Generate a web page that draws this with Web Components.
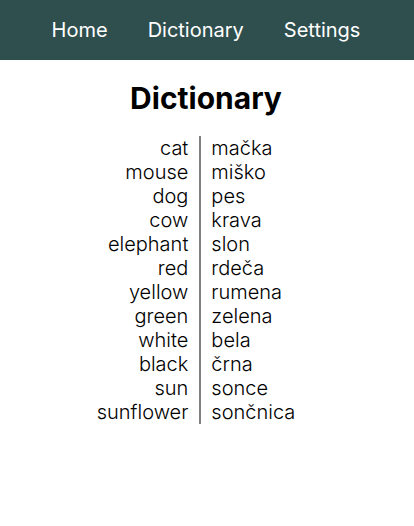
<!DOCTYPE html>
<html lang="en">
<head>
<meta charset="utf-8">
<meta name="viewport" content="width=device-width, initial-scale=1">
<title>Dictionary</title>
<style>
body { margin: 0; background: #fff; color: #000; font-family: Inter, "Noto Sans", sans-serif; font-size: 20px; line-height: 24px; font-weight: 300; }
</style>
</head>
<body>
<dictionary-app></dictionary-app>
<script>
class NavLink extends HTMLElement {
  constructor() {
    super();
    this.attachShadow({ mode: "open" }).innerHTML = `
      <style>
        :host { display: block; }
        a { color: #fff; text-decoration: none; font-weight: 400; }
      </style>
      <a href="#"><slot></slot></a>`;
  }
  connectedCallback() {
    this.shadowRoot.querySelector("a").href = this.getAttribute("to") || "#";
  }
}
customElements.define("nav-link", NavLink);

class NavBar extends HTMLElement {
  constructor() {
    super();
    this.attachShadow({ mode: "open" }).innerHTML = `
      <style>
        :host { display: block; background: darkslategray; }
        nav { display: flex; justify-content: center; gap: 40px; padding: 18px 2px 18px 0; }
      </style>
      <nav><slot></slot></nav>`;
  }
}
customElements.define("nav-bar", NavBar);

class WordList extends HTMLElement {
  constructor() {
    super();
    this.attachShadow({ mode: "open" }).innerHTML = `
      <style>
        :host { display: flex; justify-content: center; }
        table { border-collapse: separate; border-spacing: 0; }
        td { padding: 0 20px 0 10px; }
        td:first-child { padding: 0 11px 0 0; text-align: right; border-right: 2px solid #808080; }
      </style>
      <table><tbody></tbody></table>`;
  }
  set words(pairs) {
    const body = this.shadowRoot.querySelector("tbody");
    body.replaceChildren();
    for (const pair of pairs) {
      const row = body.insertRow();
      for (const word of pair) row.insertCell().textContent = word;
    }
  }
}
customElements.define("word-list", WordList);

class DictionaryApp extends HTMLElement {
  constructor() {
    super();
    this.attachShadow({ mode: "open" }).innerHTML = `
      <style>
        :host { display: block; }
        main { padding: 20px 2px 20px 0; }
        h1 { margin: 0 0 20px; font-size: 30px; line-height: 36px; font-weight: 700; text-align: center; }
      </style>
      <nav-bar>
        <nav-link to="#home">Home</nav-link>
        <nav-link to="#dictionary">Dictionary</nav-link>
        <nav-link to="#settings">Settings</nav-link>
      </nav-bar>
      <main>
        <h1>Dictionary</h1>
        <word-list></word-list>
      </main>`;
    this.shadowRoot.querySelector("word-list").words = [
      ["cat", "mačka"], ["mouse", "miško"], ["dog", "pes"], ["cow", "krava"],
      ["elephant", "slon"], ["red", "rdeča"], ["yellow", "rumena"], ["green", "zelena"],
      ["white", "bela"], ["black", "črna"], ["sun", "sonce"], ["sunflower", "sončnica"]
    ];
  }
}
customElements.define("dictionary-app", DictionaryApp);
</script>
</body>
</html>
